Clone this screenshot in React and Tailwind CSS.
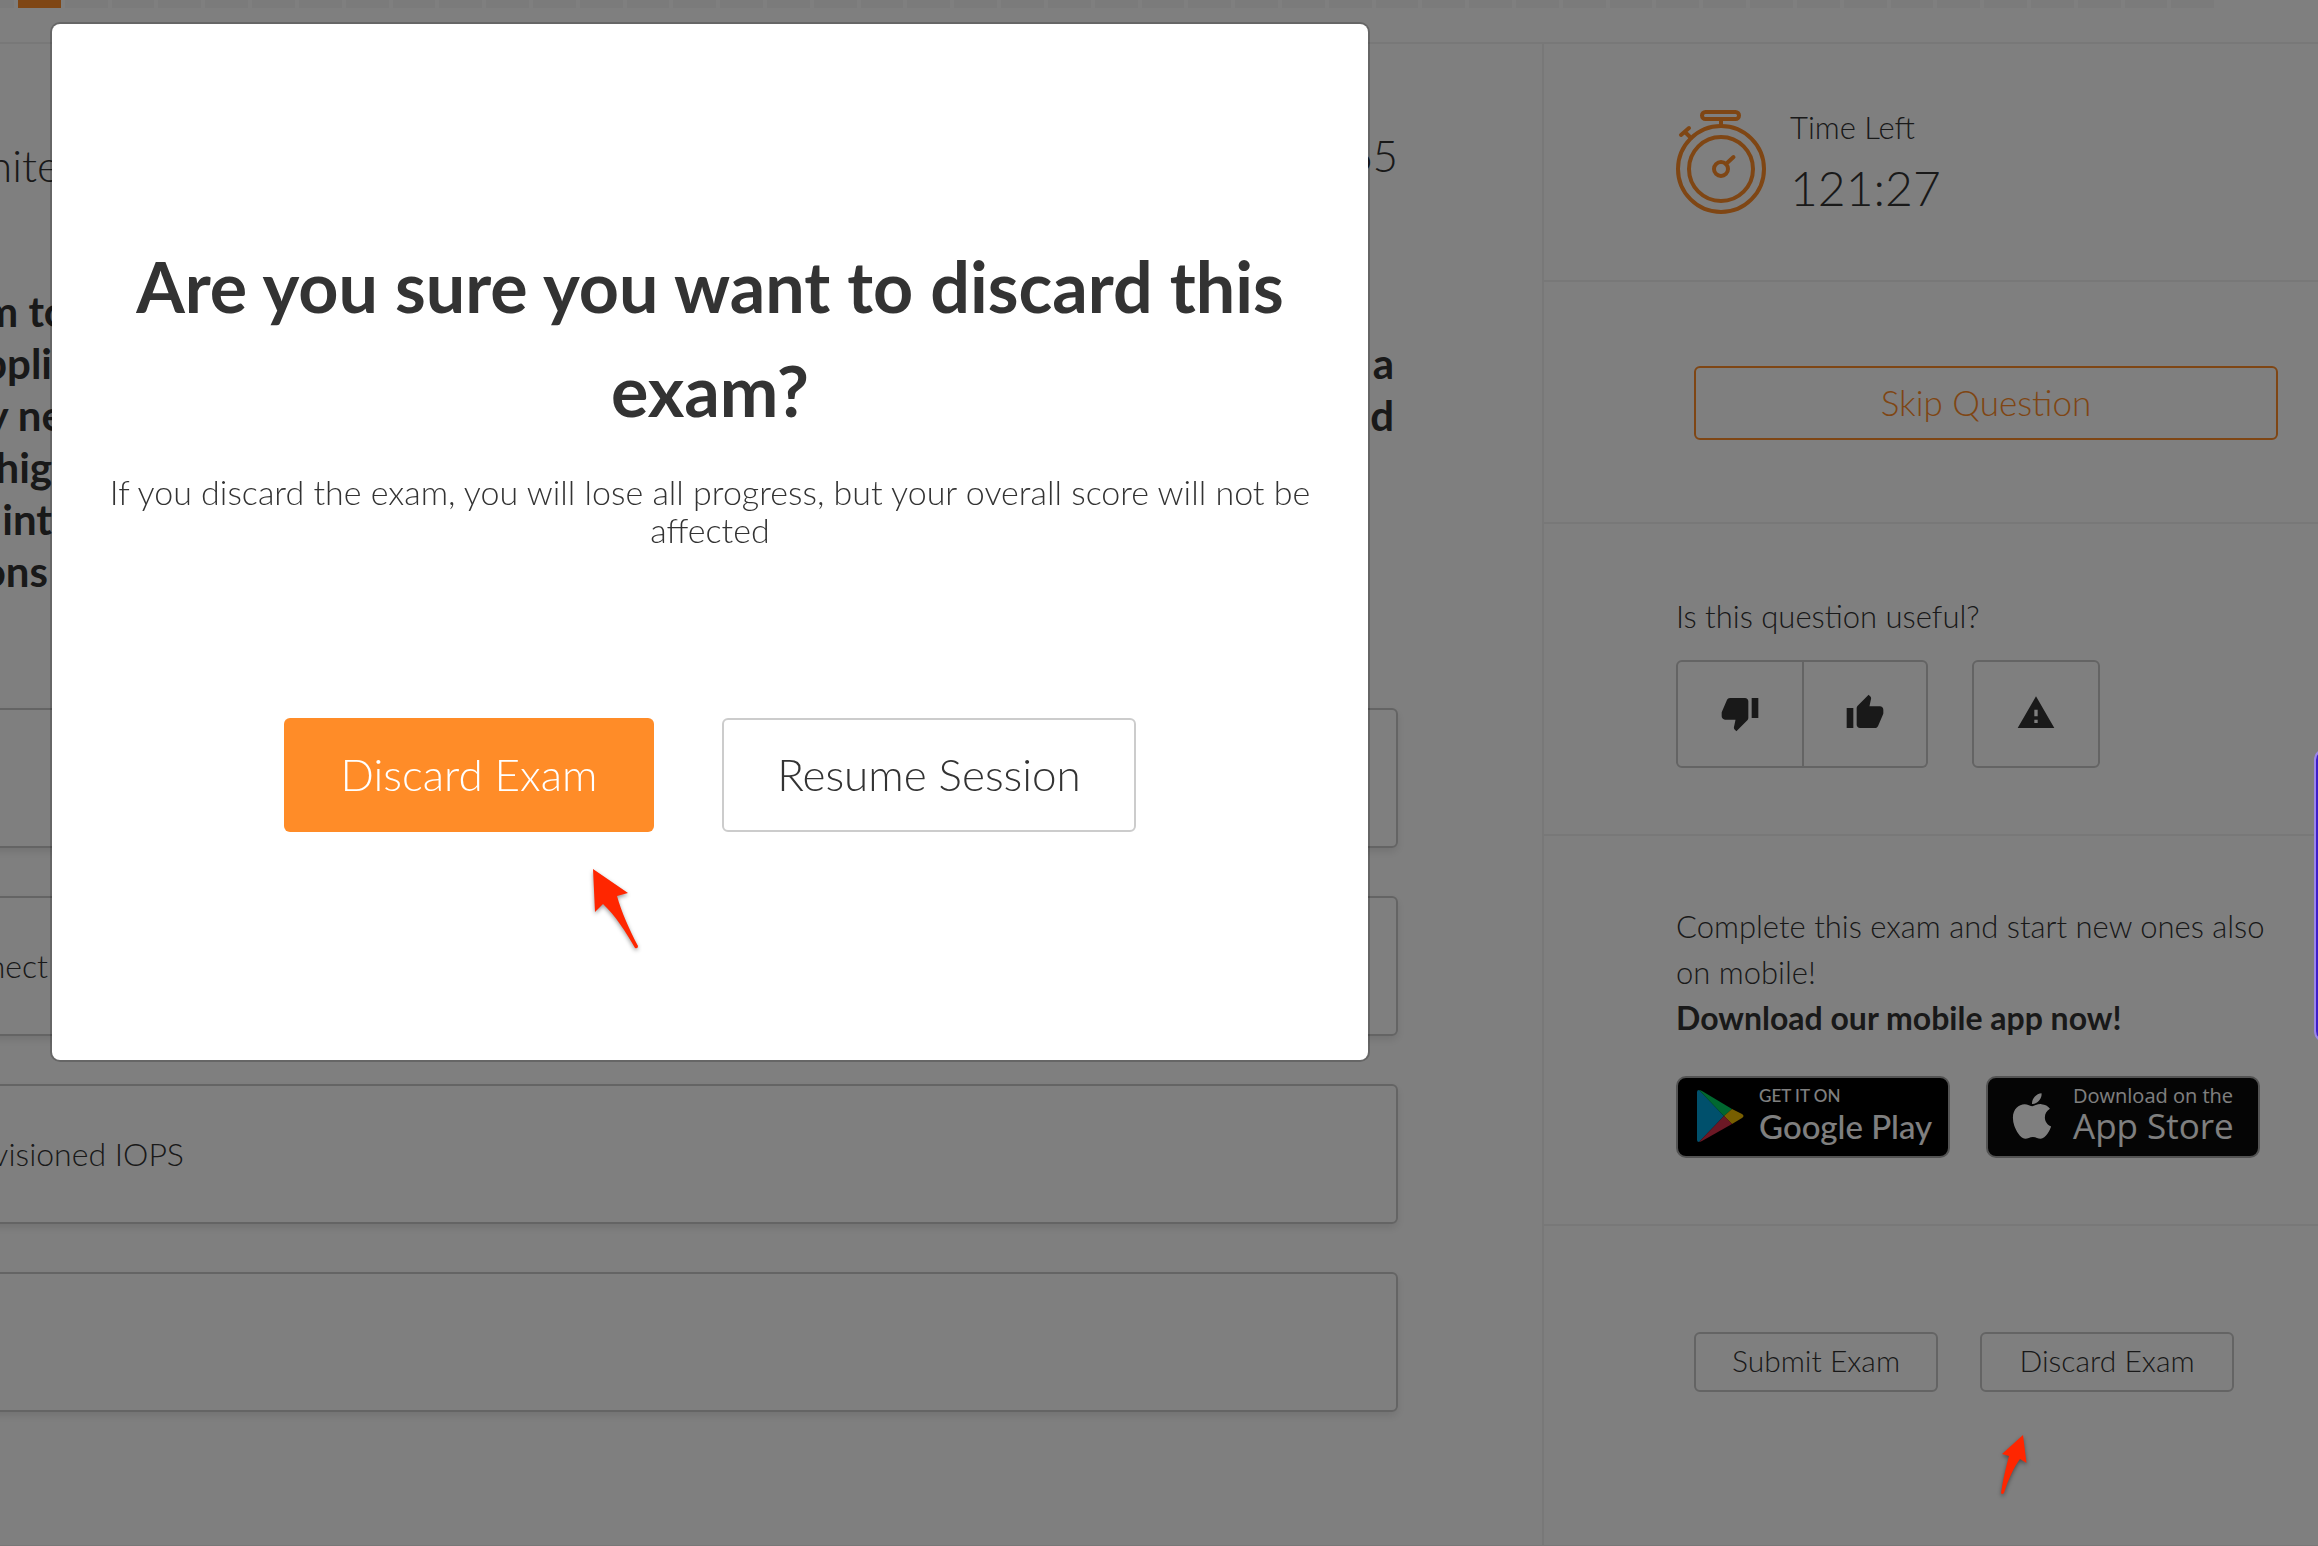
import React, { useState } from 'react';
import { MdThumbDown, MdThumbUp, MdWarning } from 'react-icons/md';
import { FaApple } from 'react-icons/fa';

const QUESTION_COUNT = 47;

// width is where the visible part of the line ends
const questionLines = [
    { start: 'm to', width: 'w-17', end: '' },
    { start: 'appli', width: 'w-13', end: 'a' },
    { start: 'y ne', width: 'w-16', end: 'd' },
    { start: 'hig', width: 'w-13', end: '' },
    { start: 'int', width: 'w-13', end: '' },
    { start: 'ons', width: 'w-12', end: '' },
];

const options = [
    { id: 'a', text: '', width: 'w-12' },
    { id: 'b', text: 'nect', width: 'w-12' },
    { id: 'c', text: 'visioned IOPS', width: 'w-46' },
    { id: 'd', text: '', width: 'w-12' },
];

const App = () => {
    const [selected, setSelected] = useState('');

    return (
        <div className="min-h-screen overflow-hidden bg-white font-['Lato',sans-serif] font-light text-[#333]">
            <ProgressBar />
            <div className="flex border-b-2 border-[#f0f0f0]">
                <main className="min-w-0 flex-1 pr-[144px]">
                    <div className="flex items-start justify-between pt-[81px] text-[44px] leading-[60px]">
                        <h1 className="flex w-15 justify-end pt-2.5 whitespace-nowrap">hite</h1>
                        <span>65</span>
                    </div>
                    <div className="pt-[90px] pr-1 text-[42px] leading-[52px] font-bold">
                        {questionLines.map(line => (
                            <div key={line.start} className="flex justify-between">
                                <span className={`flex justify-end whitespace-nowrap ${line.width}`}>{line.start}</span>
                                <span>{line.end}</span>
                            </div>
                        ))}
                    </div>
                    <div className="flex flex-col gap-12 pt-[111px]">
                        {options.map(option => (
                            <Option
                                key={option.id}
                                option={option}
                                checked={selected === option.id}
                                onChange={() => setSelected(option.id)}
                            />
                        ))}
                    </div>
                </main>
                <Sidebar />
            </div>
            <DiscardModal />
            {/* Side widget peeking in from the right edge */}
            <div className="fixed top-[748px] -right-8 z-30 h-[295px] w-9 rounded-xl border-2 border-[#9a86e8] bg-[#3c1ec8]" />
        </div>
    );
};

const ProgressBar = () => (
    <div className="flex h-11 items-start gap-1 border-b-2 border-[#f0f0f0] pr-[104px]">
        <span className="h-2 w-3.5 shrink-0 bg-[#f7f7f7]" />
        {Array.from({ length: QUESTION_COUNT }, (_, i) => (
            <span key={i} className={`h-2 flex-1 ${i === 0 ? 'bg-[#ff8c28]' : 'bg-[#f7f7f7]'}`} />
        ))}
    </div>
);

const Option = ({ option, checked, onChange }) => (
    <label className="-ml-4 flex h-[140px] cursor-pointer items-center rounded-md border-2 border-[#c8c8c8] pl-3.5 text-[32px] shadow-[0_4px_8px_rgba(0,0,0,0.1)]">
        <input type="radio" name="answer" value={option.id} checked={checked} onChange={onChange} className="sr-only" />
        <span className={`flex justify-end whitespace-nowrap ${option.width}`}>{option.text}</span>
    </label>
);

const Sidebar = () => (
    <aside className="w-[776px] shrink-0 border-l-2 border-[#f0f0f0] text-[31px] leading-[46px]">
        <section className="flex h-[238px] gap-6 border-b-2 border-[#f0f0f0] pt-[66px] pl-[132px]">
            <Stopwatch />
            <div className="-mt-1.5">
                <p>Time Left</p>
                <p className="pt-2 text-[48px] leading-[60px]">121:27</p>
            </div>
        </section>

        <section className="h-[242px] border-b-2 border-[#f0f0f0] pt-[84px] pr-10 pl-[150px]">
            <button className="h-[74px] w-full rounded-md border-2 border-[#ff8c28] pb-0.5 text-[35px] text-[#ff8c28]">
                Skip Question
            </button>
        </section>

        <section className="h-[312px] border-b-2 border-[#f0f0f0] pt-[69px] pl-[132px]">
            <p>Is this question useful?</p>
            <div className="flex pt-[21px]">
                <button aria-label="Not useful" className="flex h-[108px] w-32 items-center justify-center rounded-l-md border-2 border-[#c8c8c8] pb-0.5">
                    <MdThumbDown size={40} />
                </button>
                <button aria-label="Useful" className="flex h-[108px] w-[124px] items-center justify-center rounded-r-md border-2 border-l-0 border-[#c8c8c8] pb-0.5">
                    <MdThumbUp size={40} />
                </button>
                <button aria-label="Report question" className="ml-11 flex h-[108px] w-32 items-center justify-center rounded-md border-2 border-[#c8c8c8] pb-0.5">
                    <MdWarning size={40} />
                </button>
            </div>
        </section>

        <section className="h-[390px] border-b-2 border-[#f0f0f0] pt-[67px] pr-10 pl-[132px]">
            <p>Complete this exam and start new ones also on mobile!</p>
            <p className="text-[32px] font-bold">Download our mobile app now!</p>
            <div className="flex gap-9 pt-[35px]">
                <a href="#google-play" className="flex h-[82px] w-[274px] items-center gap-[15px] rounded-[10px] border-2 border-[#a6a6a6] bg-black pb-0.5 pl-[18px] whitespace-nowrap text-white">
                    <PlayLogo />
                    <span className="flex flex-col font-medium">
                        <span className="text-[17px] leading-[20px]">GET IT ON</span>
                        <span className="text-[33px] leading-[40px]">Google Play</span>
                    </span>
                </a>
                <a href="#app-store" className="flex h-[82px] w-[274px] items-center gap-[15px] rounded-[10px] border-2 border-[#a6a6a6] bg-[#0a0a0a] pb-0.5 pl-[18px] whitespace-nowrap text-white">
                    <FaApple size={52} />
                    <span className="flex flex-col font-['Open_Sans',sans-serif] font-medium">
                        <span className="text-[20px] leading-[20px]">Download on the</span>
                        <span className="text-[35px] leading-[40px]">App Store</span>
                    </span>
                </a>
            </div>
        </section>

        <section className="flex h-[319px] gap-[42px] pt-[106px] pl-[150px]">
            <button className="h-[60px] w-[244px] rounded-md border-2 border-[#c8c8c8] pb-1 text-[30px]">Submit Exam</button>
            <div className="relative h-[60px]">
                <button className="h-[60px] w-[254px] rounded-md border-2 border-[#c8c8c8] pb-1 text-[30px]">Discard Exam</button>
                <svg viewBox="0 0 34 66" className="absolute top-[100px] left-4 z-20 h-[66px] w-[34px] drop-shadow-[0_2px_2px_rgba(0,0,0,0.4)]">
                    <path d="M27 3L30.500 31L24 27C18 35 12 48 8 61Q6 63 5 61C7 47 10 35 13 24L6 22Z" fill="#ff2600" />
                </svg>
            </div>
        </section>
    </aside>
);

const DiscardModal = () => (
    <div className="fixed inset-0 z-10 flex items-start bg-black/50 pt-6 pl-[52px]">
        <div role="dialog" aria-modal="true" aria-labelledby="discard-title" className="relative h-[1036px] w-[1316px] rounded-lg bg-white px-12 pt-[210px] text-center shadow-[0_0_0_2px_rgba(0,0,0,0.2)]">
            <h2 id="discard-title" className="text-[70px] leading-[104px] font-bold">
                Are you sure you want to discard this exam?
            </h2>
            <p className="pt-[31px] text-[34px] leading-[38px]">
                If you discard the exam, you will lose all progress, but your overall score will not be affected
            </p>
            <div className="flex justify-center gap-[68px] pt-[169px] text-[44px]">
                <button className="h-[114px] w-[370px] rounded-md bg-[#ff8c28] pb-0.5 text-white">Discard Exam</button>
                <button className="h-[114px] w-[414px] rounded-md border-2 border-[#ccc] pb-0.5">Resume Session</button>
            </div>
            <svg viewBox="0 0 56 90" className="absolute top-[841px] left-[537px] h-[90px] w-14 drop-shadow-[0_2px_2px_rgba(0,0,0,0.4)]">
                <path d="M4 4L39 28L28 31C32 46 41 66 49 81Q49 84 46 83C37 67 26 50 14 39L6 47Z" fill="#ff2600" />
            </svg>
        </div>
    </div>
);

const Stopwatch = () => (
    <svg viewBox="0 0 90 104" className="h-[104px] w-[90px]" fill="none" stroke="#ff8c28" strokeWidth="4" strokeLinecap="round">
        <circle cx="45" cy="59" r="43" />
        <circle cx="45" cy="59" r="32" />
        <circle cx="45" cy="59" r="7" />
        <path d="M50 54L57.500 47" />
        <rect x="26" y="2" width="37" height="7" rx="3.500" />
        <path d="M45 10V15M5 25L13 18M9 22L15 28" />
    </svg>
);

const PlayLogo = () => (
    <svg viewBox="0 0 48 52" className="h-[52px] w-12">
        <path d="M1 2Q1 0 3 0L28 26L3 52Q1 52 1 50Z" fill="#00a0d8" />
        <path d="M3 0Q4 0 6 1L36 19L28 26Z" fill="#00d060" />
        <path d="M36 19L46 24Q49 26 46 28L36 34L28 26Z" fill="#f0bc00" />
        <path d="M28 26L36 34L6 51Q4 52 3 52Z" fill="#d8304a" />
    </svg>
);

export default App;
